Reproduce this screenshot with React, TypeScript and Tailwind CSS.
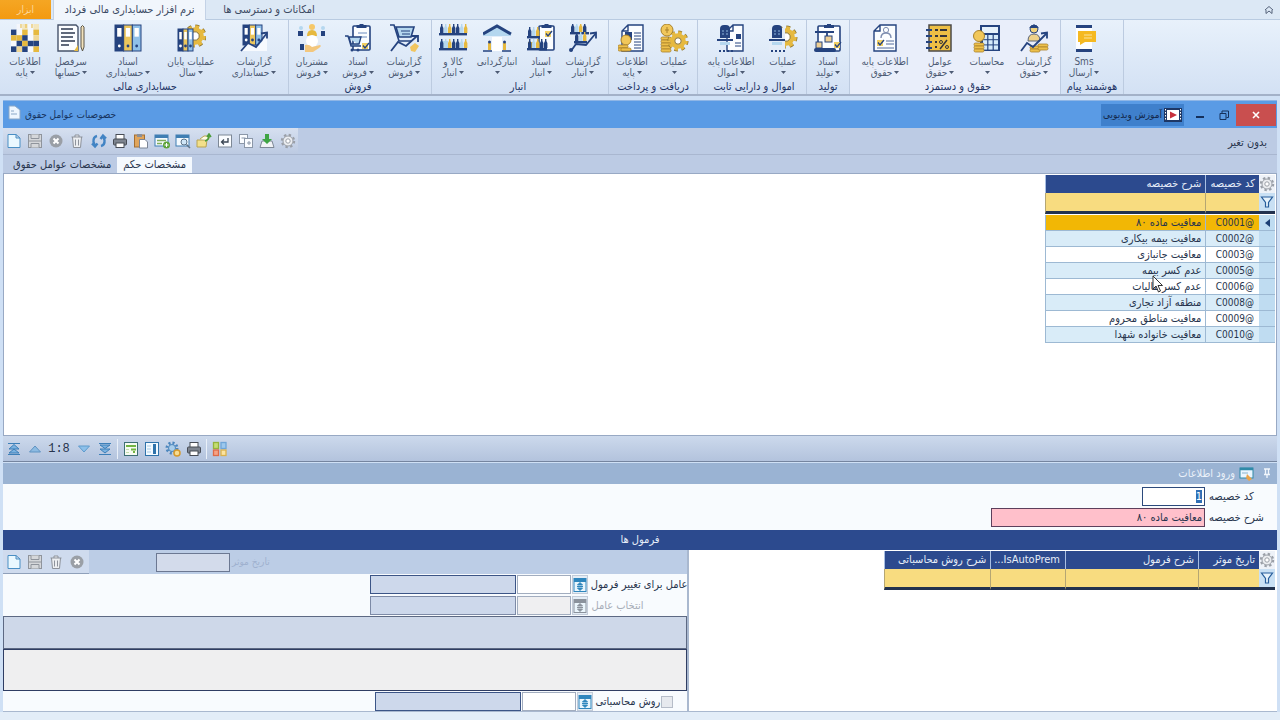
import { useState, type ReactNode } from 'react'
import clsx from 'clsx'

const NAVY = '#25437f'
const GOLD = '#e6b93f'
const SKY = '#b5d7ef'

/* ---------- ribbon icon parts ---------- */

function Gear({ cx, cy, r }: { cx: number; cy: number; r: number }) {
  const tooth = (2 * Math.PI * r) / 16
  return (
    <g fill="none">
      <circle cx={cx} cy={cy} r={r} stroke="#8a7331" strokeWidth="5" strokeDasharray={`${tooth} ${tooth}`} />
      <circle cx={cx} cy={cy} r={r} stroke={GOLD} strokeWidth="3.6" strokeDasharray={`${tooth} ${tooth}`} />
      <circle cx={cx} cy={cy} r={r - 2.5} stroke={GOLD} strokeWidth="4.5" />
      <circle cx={cx} cy={cy} r={r - 4.8} stroke="#8a7331" fill="#fff" />
    </g>
  )
}

function Binders({ x, y, w, h }: { x: number; y: number; w: number; h: number }) {
  const c = w / 3
  return (
    <g stroke={NAVY}>
      <rect x={x} y={y} width={c} height={h} fill={NAVY} />
      <rect x={x + c} y={y} width={c} height={h} fill="#ecc65c" />
      <rect x={x + 2 * c} y={y} width={c} height={h} fill="#8fc0e8" />
      {[0, 1, 2].map((i) => (
        <g key={i} stroke="none">
          <rect x={x + i * c + c / 4} y={y + 3} width={c / 2} height={h / 3} fill="#fff" />
          <circle cx={x + i * c + c / 2} cy={y + h - 5} r="1.4" fill={i === 0 ? '#fff' : NAVY} />
        </g>
      ))}
    </g>
  )
}

function Trend({ d }: { d: string }) {
  return (
    <g fill="none" stroke={NAVY} strokeWidth="1.8">
      <path d={d} />
      <path d="M21 9.5 L27 8.5 L27 14.5" />
    </g>
  )
}

function Coins({ x, y, rows }: { x: number; y: number; rows: number }) {
  return (
    <g fill="#edc04b" stroke="#a9822a" strokeWidth=".8">
      {Array.from({ length: rows }, (_, i) => (
        <rect key={i} x={x} y={y + i * 3} width="10" height="3" rx="1.4" />
      ))}
    </g>
  )
}

function Page({ x, y, w, h }: { x: number; y: number; w: number; h: number }) {
  return (
    <path
      d={`M${x + 6} ${y} H${x + w} V${y + h} H${x} V${y + 6} Z M${x + 6} ${y} V${y + 6} H${x}`}
      fill="#fbfdff"
      stroke={NAVY}
      strokeWidth="1.4"
    />
  )
}

function Shelf({ x, y, w }: { x: number; y: number; w: number }) {
  const n = Math.floor(w / 4)
  return (
    <g>
      {Array.from({ length: n }, (_, i) => (
        <path
          key={i}
          d={`M${x + i * 4 + 1} ${y} v-5 l1 -2 v-2 h1.4 v2 l1 2 v5 z`}
          fill={[NAVY, SKY, GOLD, NAVY][i % 4]}
        />
      ))}
      <rect x={x} y={y} width={w} height="2.4" fill={NAVY} />
    </g>
  )
}

function Cart() {
  return (
    <g fill="none" stroke={NAVY} strokeWidth="1.6">
      <path d="M6 3 H24 L21 13 H9 Z" fill={SKY} />
      <path d="M0 1 H4 L9 17 H22" />
      <path d="M11 7 h9 M12 10 h8" strokeWidth="1" />
    </g>
  )
}

function Clipboard({ x, y, w, h }: { x: number; y: number; w: number; h: number }) {
  return (
    <g>
      <rect x={x} y={y + 2} width={w} height={h - 2} rx="1" fill="#fbfdff" stroke={NAVY} strokeWidth="1.6" />
      <path d={`M${x + w / 2 - 5} ${y + 4} v-3 h3 v-1 h4 v1 h3 v3 z`} fill={NAVY} />
    </g>
  )
}

function Check({ x, y }: { x: number; y: number }) {
  return (
    <g>
      <rect x={x} y={y} width="6" height="6" fill="#f2cf62" />
      <path d={`M${x + 1} ${y + 2.5} l2 2.5 l4 -5`} fill="none" stroke={NAVY} strokeWidth="1.3" />
    </g>
  )
}

function Helmet({ x }: { x: number }) {
  return (
    <g>
      <path d={`M${x + 3} 14 V5 q0 -4 4 -4 h2 q4 0 4 4 V14 Z`} fill={NAVY} />
      <path d={`M${x + 5} 7 h2 M${x + 9} 7 h2 M${x + 5} 10 h2 M${x + 9} 10 h2`} stroke="#8fb6dd" />
      <rect x={x} y="15" width="16" height="2" fill={NAVY} />
      <path d={`M${x + 3} 18 h10 v3 h-10 z`} fill={SKY} />
      <path d={`M${x + 2} 27 h14`} stroke={NAVY} strokeWidth="2" strokeDasharray="2 2" />
    </g>
  )
}

const checker = [
  ['', '#f4f6fb', '#f3e6bd', '#f4f6fb', '#f3e6bd'],
  [NAVY, '#f7f9fd', GOLD, '#f7f9fd', GOLD],
  [GOLD, GOLD, NAVY, '#f7f9fd', '#f0d795'],
  ['#f7f9fd', NAVY, GOLD, NAVY, NAVY],
  [NAVY, '#f0d795', NAVY, '#f7f9fd', GOLD],
]

const icons: Record<string, ReactNode> = {
  checker: (
    <g>
      {checker.flatMap((row, r) =>
        row.map((fill, c) => fill && <rect key={`${r}-${c}`} x={c * 5.6} y={r * 5.6} width="5.6" height="5.6" fill={fill} />)
      )}
      <path d="M10 0 v4 M15 0 v4 M21 0 v4" stroke={GOLD} />
    </g>
  ),
  ledger: (
    <g>
      <path d="M1 1 H19 L21 3 V27 H1 Z" fill="#fbfdff" stroke="#46536b" strokeWidth="1.4" />
      <path d="M4 5 h12 M4 9 h14 M4 13 h12 M4 17 h14 M4 21 h8" stroke="#2c3850" strokeWidth="1.4" />
      <path d="M17 27 L21 21 V27 Z" fill={GOLD} />
      <path d="M24 3 q1.500 -3 3 0 V23 L25.500 27 L24 23 Z" fill="#f3e3bd" stroke="#5a5548" />
    </g>
  ),
  binders: <Binders x={1} y={1} w={26} h={26} />,
  bindersGear: (
    <g>
      <Gear cx={18} cy={12} r={9} />
      <Binders x={1} y={5} w={15} h={22} />
    </g>
  ),
  bindersChart: (
    <g>
      <Binders x={3} y={1} w={19} h={20} />
      <path d="M1 27 L8 19 L17 23 L27 12 V27 Z" fill="#f7fafe" />
      <Trend d="M1 27 L8 19 L16 23 L27 9" />
    </g>
  ),
  customers: (
    <g>
      <circle cx="3" cy="4" r="2" fill={SKY} />
      <rect x="0" y="7" width="5" height="5" fill={NAVY} />
      <circle cx="25" cy="4" r="2" fill={SKY} />
      <rect x="23" y="7" width="4" height="5" fill={NAVY} />
      <circle cx="14" cy="3" r="3" fill="#f6c869" />
      <path d="M9 12 q0 -6 5 -6 t5 6 z" fill={GOLD} />
      <circle cx="14" cy="17" r="6" fill="#fff" />
      <path d="M7 21 q4 -1 7 2 l8 -2 q2 1 -1 3 l-6 4 h-8 z" fill="#f3c77d" />
      <rect x="2" y="20" width="4" height="6" fill={NAVY} />
    </g>
  ),
  cartDoc: (
    <g>
      <Clipboard x={9} y={0} w={17} h={26} />
      <path d="M14 9 h9 M15 13 h8" stroke="#6a8cc0" />
      <path d="M1 12 h3 l3 10 h10 M5 13 h12 l-2 7 h-8 z" fill={SKY} stroke={NAVY} strokeWidth="1.3" />
      <circle cx="8" cy="26" r="1.500" fill={NAVY} />
      <circle cx="14" cy="26" r="1.500" fill={NAVY} />
      <Check x={18} y={19} />
    </g>
  ),
  cartChart: (
    <g>
      <Cart />
      <path d="M1 27 L8 18 L16 22 L27 12" fill="none" stroke={NAVY} strokeWidth="1.8" />
      <path d="M22 12 h6 v6" fill="none" stroke={NAVY} strokeWidth="1.8" />
      <path d="M20 23 l5 -4 l4 3 l-4 6 l-4 -1 z" fill="#f1c560" />
    </g>
  ),
  goods: (
    <g>
      <Shelf x={0} y={9} w={28} />
      <rect x="1" y="17" width="8" height="7" fill={SKY} />
      <Shelf x={0} y={24} w={28} />
    </g>
  ),
  warehouse: (
    <g>
      <path d="M0 9 L14 1 L28 9 V12 H0 Z" fill={SKY} />
      <path d="M0 10 L14 2 L28 10" fill="none" stroke={NAVY} strokeWidth="3" />
      <rect x="3" y="12" width="22" height="15" fill="#e4eefa" />
      <rect x="9" y="13" width="10" height="14" fill="#fff" />
      <rect x="5" y="19" width="3" height="7" fill={GOLD} />
      <rect x="20" y="19" width="3" height="7" fill={GOLD} />
      <circle cx="6.500" cy="18" r="1.500" fill={NAVY} />
      <circle cx="21.500" cy="18" r="1.500" fill={NAVY} />
      <path d="M0 27 h9 M19 27 h9" stroke={NAVY} strokeWidth="1.6" />
    </g>
  ),
  stockDoc: (
    <g>
      <Clipboard x={12} y={0} w={15} h={26} />
      <Check x={18} y={7} />
      <Shelf x={0} y={12} w={13} />
      <rect x="1" y="18" width="6" height="6" fill={GOLD} />
      <Shelf x={0} y={24} w={20} />
    </g>
  ),
  stockChart: (
    <g>
      <Shelf x={1} y={8} w={19} />
      <Shelf x={5} y={17} w={13} />
      <Trend d="M2 27 L7 20 L17 21 L27 9" />
      <circle cx="2" cy="26" r="2" fill={NAVY} />
    </g>
  ),
  coinDoc: (
    <g>
      <Page x={4} y={1} w={21} h={26} />
      <rect x="7" y="8" width="7" height="8" fill={NAVY} />
      <path d="M16 9 h7 M16 12 h7 M16 15 h7 M16 18 h7 M16 21 h7 M16 24 h7" stroke={NAVY} />
      <circle cx="8" cy="16" r="5" fill="#f1c75a" stroke="#a9822a" />
      <Coins x={0} y={21} rows={2} />
      <Coins x={3} y={24} rows={1} />
    </g>
  ),
  coinGear: (
    <g>
      <Coins x={1} y={13} rows={5} />
      <circle cx="7" cy="6" r="6" fill="#f1c75a" stroke="#a9822a" />
      <path d="M5 6 h4 M7 3 v6" stroke="#a9822a" />
      <Gear cx={18} cy={17} r={8} />
    </g>
  ),
  assetDoc: (
    <g>
      <Page x={10} y={1} w={16} h={26} />
      <path d="M19 10 h5 v5 h-5 z" fill={NAVY} />
      <path d="M18 19 h6 M18 22 h6" stroke={NAVY} />
      <Helmet x={0} />
    </g>
  ),
  assetGear: (
    <g>
      <Gear cx={17} cy={13} r={9} />
      <rect x="0" y="4" width="16" height="24" fill="#e3ecf8" />
      <Helmet x={0} />
    </g>
  ),
  production: (
    <g>
      <Clipboard x={4} y={0} w={22} h={27} />
      <path d="M1 8 H20 M13 8 V12" stroke={NAVY} strokeWidth="1.8" />
      <rect x="11" y="12" width="7" height="6" fill="#efcf94" stroke={NAVY} />
      <rect x="2" y="18" width="6" height="6" fill="#efcf94" stroke={NAVY} />
      <rect x="0" y="24" width="22" height="4" rx="2" fill={NAVY} />
      <Check x={20} y={18} />
    </g>
  ),
  person: (
    <g>
      <Page x={3} y={1} w={22} h={26} />
      <circle cx="15" cy="6" r="2.600" fill="none" stroke="#7d8db0" />
      <path d="M10 14 q0 -5 5 -5 t5 5" fill="none" stroke="#7d8db0" strokeWidth="1.4" />
      <Check x={6} y={16} />
      <path d="M15 17 h8 M6 24 h17 M15 20 h8" stroke="#536a9c" />
    </g>
  ),
  factors: (
    <g>
      <rect x="3" y="1" width="22" height="26" fill="#edbf45" stroke="#4b4a48" strokeWidth="1.5" />
      <path d="M0 6 h6 M0 12 h6 M0 18 h6 M0 24 h6" stroke={NAVY} strokeWidth="1.8" />
      <path d="M9 6 h3 M14 6 h7 M9 12 h3 M14 12 h7 M9 18 h2 M9 23 h2" stroke="#35343a" strokeWidth="2" />
      <path d="M14 25 L21 16" stroke="#35343a" strokeWidth="1.5" />
      <circle cx="15" cy="18" r="1.500" fill="none" stroke="#35343a" />
      <circle cx="21" cy="23" r="1.500" fill="none" stroke="#35343a" />
    </g>
  ),
  calculator: (
    <g>
      <rect x="7" y="1" width="20" height="26" fill={NAVY} />
      <rect x="9" y="3" width="16" height="6" fill="#e6f1fb" />
      {[0, 1, 2].flatMap((r) =>
        [0, 1, 2].map((c) => <rect key={`${r}${c}`} x={10 + c * 5.4} y={11 + r * 5.2} width="4.2" height="4.2" fill="#d5eafa" />)
      )}
      <circle cx="6" cy="12" r="5.500" fill="#f1c75a" stroke="#a9822a" />
      <Coins x={1} y={19} rows={3} />
    </g>
  ),
  payReport: (
    <g>
      <circle cx="14" cy="5" r="4" fill="#f0d27c" stroke={NAVY} />
      <path d="M9 4 q5 -7 10 0 z" fill={NAVY} />
      <path d="M8 17 q0 -7 6 -7 t6 7 z" fill="#eed18a" stroke="#5d6577" />
      <Coins x={10} y={22} rows={2} />
      <Coins x={18} y={20} rows={2} />
      <Trend d="M1 27 L7 19 L13 23 L27 9" />
    </g>
  ),
  sms: (
    <g>
      <rect x="6" y="1" width="16" height="27" rx="1" fill="#fdfeff" />
      <path d="M6 1 h16 v3 h-16 z M6 25 h16 v3 h-16 z" fill={NAVY} />
      <path d="M8 7 H26 V18 H15 L10 21 V18 H8 Z" fill="#f5b921" />
      <path d="M14 11 h8 M14 14 h8" stroke="#fbe3a0" />
    </g>
  ),
}

interface RibbonItem {
  icon: string
  top: string
  bottom?: string
  width: string
}

interface RibbonGroup {
  title: string
  items: RibbonItem[]
  className?: string
}

const ribbon: RibbonGroup[] = [
  {
    title: 'حسابداری مالی',
    className: 'pl-0.5',
    items: [
      { icon: 'checker', top: 'اطلاعات', bottom: 'پایه', width: 'w-[46px]' },
      { icon: 'ledger', top: 'سرفصل', bottom: 'حسابها', width: 'w-[46px]' },
      { icon: 'binders', top: 'اسناد', bottom: 'حسابداری', width: 'w-[68px]' },
      { icon: 'bindersGear', top: 'عملیات پایان', bottom: 'سال', width: 'w-[58px]' },
      { icon: 'bindersChart', top: 'گزارشات', bottom: 'حسابداری', width: 'w-[68px]' },
    ],
  },
  {
    title: 'فروش',
    className: 'pr-1',
    items: [
      { icon: 'customers', top: 'مشتریان', bottom: 'فروش', width: 'w-[46px]' },
      { icon: 'cartDoc', top: 'اسناد', bottom: 'فروش', width: 'w-[46px]' },
      { icon: 'cartChart', top: 'گزارشات', bottom: 'فروش', width: 'w-[46px]' },
    ],
  },
  {
    title: 'انبار',
    className: 'pr-1',
    items: [
      { icon: 'goods', top: 'کالا و', bottom: 'انبار', width: 'w-[42px]' },
      { icon: 'warehouse', top: 'انبارگردانی', width: 'w-[46px]' },
      { icon: 'stockDoc', top: 'اسناد', bottom: 'انبار', width: 'w-[42px]' },
      { icon: 'stockChart', top: 'گزارشات', bottom: 'انبار', width: 'w-[42px]' },
    ],
  },
  {
    title: 'دریافت و پرداخت',
    className: 'px-0.5',
    items: [
      { icon: 'coinDoc', top: 'اطلاعات', bottom: 'پایه', width: 'w-[42px]' },
      { icon: 'coinGear', top: 'عملیات', width: 'w-[42px]' },
    ],
  },
  {
    title: 'اموال و دارایی ثابت',
    className: 'pl-1',
    items: [
      { icon: 'assetDoc', top: 'اطلاعات پایه', bottom: 'اموال', width: 'w-[58px]' },
      { icon: 'assetGear', top: 'عملیات', width: 'w-[46px]' },
    ],
  },
  { title: 'تولید', items: [{ icon: 'production', top: 'اسناد', bottom: 'تولید', width: 'w-[42px]' }] },
  {
    title: 'حقوق و دستمزد',
    className: 'bg-[#e9eefa] pl-1.5',
    items: [
      { icon: 'person', top: 'اطلاعات پایه', bottom: 'حقوق', width: 'w-[58px]' },
      { icon: 'factors', top: 'عوامل', bottom: 'حقوق', width: 'w-[52px]' },
      { icon: 'calculator', top: 'محاسبات', width: 'w-[42px]' },
      { icon: 'payReport', top: 'گزارشات', bottom: 'حقوق', width: 'w-[52px]' },
    ],
  },
  {
    title: 'هوشمند پیام',
    className: 'w-[63px]',
    items: [{ icon: 'sms', top: 'Sms', bottom: 'ارسال', width: 'w-[46px]' }],
  },
]

function Ribbon() {
  return (
    <div className="flex border-b-2 border-[#a3b1c8] bg-gradient-to-b from-[#e8f1fb] to-[#d3e1f4]">
      {ribbon.map((group) => (
        <section key={group.title} className={clsx('flex shrink-0 flex-col border-r border-[#bccbe0] pt-1', group.className)}>
          <div className="flex">
            {group.items.map((item) => (
              <button key={item.icon} className={clsx('flex h-14 shrink-0 flex-col items-center text-[10px] whitespace-nowrap text-[#4d5b74]', item.width)}>
                <svg viewBox="0 0 29 29" className="size-[29px] shrink-0">{icons[item.icon]}</svg>
                <span dir="rtl" className="mt-[3px] leading-[11px]">{item.top}</span>
                <span className="flex items-center gap-0.5 leading-[11px]">
                  {item.bottom && <span dir="rtl">{item.bottom}</span>}
                  <svg viewBox="0 0 5 3" className="my-1 h-[3px] w-[5px]"><path d="M0 0 h5 L2.500 3 z" fill="#4d5b74" /></svg>
                </span>
              </button>
            ))}
          </div>
          <h2 dir="rtl" className="text-center leading-[14px] whitespace-nowrap text-[#1f3566]">{group.title}</h2>
        </section>
      ))}
    </div>
  )
}

/* ---------- small toolbar icons ---------- */

const small: Record<string, ReactNode> = {
  new: <path d="M2 1.500 H10 L14 5 V14.500 H2 Z M10 1.500 V5 H14" fill="#eaf8ff" stroke="#4a8fc4" />,
  save: (
    <g fill="#d5d7da" stroke="#8f949c">
      <rect x="1.500" y="1.500" width="13" height="13" />
      <path d="M4 1.500 v4 h8 v-4 M1.500 8 h13 M4 14.500 v-4 h8 v4" />
    </g>
  ),
  cancel: (
    <g>
      <circle cx="8" cy="8" r="6.500" fill="#9a9fa6" />
      <path d="M5.500 5.500 l5 5 M10.500 5.500 l-5 5" stroke="#fff" strokeWidth="2" />
    </g>
  ),
  trash: <path d="M2.500 4 H13.500 M6 4 V2 H10 V4 M3.500 4 L4.500 14.500 H11.500 L12.500 4 M6.500 6.500 V12.500 M9.500 6.500 V12.500" fill="#eceef1" stroke="#8d929b" />,
  refresh: (
    <g fill="none" stroke="#4284c4" strokeWidth="2.400">
      <path d="M6 3 Q2 4 2.500 9 L4 13 M1 10.500 l3 3 l2.500 -3" />
      <path d="M10 13 Q14 12 13.500 7 L12 3 M9.500 6 l2.500 -3.500 l3 3" />
    </g>
  ),
  print: (
    <g stroke="#474c55">
      <rect x="4" y="1.500" width="8" height="5" fill="#fff" />
      <rect x="1.500" y="6" width="13" height="6" rx="1" fill="#7d848f" />
      <rect x="4" y="10" width="8" height="4.500" fill="#fff" />
    </g>
  ),
  paste: (
    <g>
      <rect x="1.500" y="2" width="10" height="12" fill="#e0a55c" stroke="#a36f33" />
      <rect x="4" y="1" width="5" height="3" fill="#8b8f97" />
      <path d="M6.500 6.500 H12 L14.500 9 V15 H6.500 Z" fill="#fff" stroke="#7b8596" />
    </g>
  ),
  formAdd: (
    <g>
      <rect x="1" y="2" width="13" height="11" fill="#f4faff" stroke="#3f7eb3" />
      <path d="M1 3.500 h13" stroke="#3f7eb3" strokeWidth="3" />
      <path d="M3 7.500 h9 M3 10.500 h5" stroke="#7fae5b" strokeWidth="1.500" />
      <circle cx="12.500" cy="12" r="3.500" fill="#5da33a" />
      <path d="M10.500 12 h4 M12.500 10 v4" stroke="#fff" />
    </g>
  ),
  formFind: (
    <g>
      <rect x="1" y="2" width="13" height="11" fill="#f4faff" stroke="#3f7eb3" />
      <path d="M1 3.500 h13" stroke="#3f7eb3" strokeWidth="3" />
      <circle cx="9" cy="9" r="3" fill="#cfe6f7" stroke="#5d7388" />
      <path d="M11.500 11.500 l3.500 3.500" stroke="#5d7388" strokeWidth="1.500" />
    </g>
  ),
  export: (
    <g>
      <path d="M1 7 H11 L10 14 H1 Z" fill="#f3e08a" stroke="#b8a352" />
      <path d="M4 6 L8 3 L14 3 L12 7" fill="#fffbe0" stroke="#b8a352" />
      <path d="M9 8 Q13 7 13 2 M11 4 l2 -3 l2 3" fill="none" stroke="#4c9c3a" strokeWidth="1.600" />
    </g>
  ),
  enter: (
    <g>
      <rect x="1.500" y="2" width="13" height="12" fill="#fafcff" stroke="#7d8896" />
      <path d="M11 5 V9 H5 M7 6.500 L4.500 9 L7 11.500" fill="none" stroke="#3b4654" strokeWidth="1.300" />
    </g>
  ),
  copy: (
    <g fill="#fafcff" stroke="#8b97a8">
      <rect x="1.500" y="1.500" width="8" height="9" />
      <rect x="6.500" y="5.500" width="8" height="9" />
      <path d="M3.500 5 h4 M9 10 h4 M11 8 v4" />
    </g>
  ),
  import: (
    <g>
      <path d="M3 8 H13 L15 14.500 H1 Z" fill="#f1f3f6" stroke="#7d8896" />
      <path d="M6 1 H10 V6 H13 L8 11 L3 6 H6 Z" fill="#3fa544" />
    </g>
  ),
  gear: (
    <g fill="none" stroke="#9a9fa7">
      <circle cx="8" cy="8" r="6.200" strokeWidth="2" strokeDasharray="2.430 2.430" />
      <circle cx="8" cy="8" r="5" fill="#eceef1" />
      <circle cx="8" cy="8" r="2.200" fill="#fff" />
    </g>
  ),
  filter: <path d="M2.500 3 H13.500 L9.500 8.500 V13 H6.500 V8.500 Z" fill="#e6f2fb" stroke="#275d9b" strokeWidth="1.200" />,
  first: <path d="M2 2.500 H14 M2 13.500 H14 M8 3.500 L13 8 H3 Z M8 8 L13 12 H3 Z" fill="#7ab2e0" stroke="#3d7fb8" />,
  up: <path d="M8 5 L13.500 11 H2.500 Z" fill="#8dbbe2" stroke="#5f93c2" />,
  down: <path d="M8 11 L13.500 5 H2.500 Z" fill="#8dc0ea" stroke="#5f9bcc" />,
  last: <path d="M2 2.500 H14 M2 13.500 H14 M8 7.500 L13 4 H3 Z M8 12 L13 8 H3 Z" fill="#7ab2e0" stroke="#3d7fb8" />,
  green: (
    <g>
      <rect x="1.500" y="1.500" width="13" height="13" fill="#f6fbf2" stroke="#3e6f74" />
      <path d="M3 5 H13 M8 8.500 H13 M10 11 H12" stroke="#72b443" strokeWidth="2" />
      <path d="M3 8.500 H6 M3 11.500 H6" stroke="#c4dfae" />
    </g>
  ),
  columns: (
    <g>
      <rect x="1.500" y="1.500" width="13" height="13" fill="#f3faff" stroke="#2f73ab" />
      <rect x="9" y="3" width="3" height="10" fill="#2f73ab" />
      <path d="M3 5 h4 M3 8 h4 M3 11 h4" stroke="#a8cbe6" />
    </g>
  ),
  gears: (
    <g fill="none">
      <circle cx="7" cy="7" r="5" stroke="#4b86bd" strokeWidth="3" strokeDasharray="2 1.900" />
      <circle cx="7" cy="7" r="3.500" fill="#a9cdea" stroke="#4b86bd" />
      <circle cx="12" cy="12" r="3" fill="#f6dc92" stroke="#d79a2b" strokeWidth="1.500" />
    </g>
  ),
  blocks: (
    <g strokeWidth="1.300">
      <rect x="1.500" y="1.500" width="5" height="6" fill="#c4dd73" stroke="#94b43c" />
      <rect x="9" y="1.500" width="5" height="6" fill="#9cc8ee" stroke="#6fa5d8" />
      <rect x="1.500" y="9" width="5" height="5.500" fill="#f6a184" stroke="#de6a48" />
      <rect x="9" y="9" width="5" height="5.500" fill="#fbe3a0" stroke="#dbb14b" />
    </g>
  ),
  doc: <path d="M2 1 H8 L13 5 V14 H2 Z M4 6 h3 M4 9 h6" fill="#eef6ff" stroke="#8aa7c7" />,
  edit: (
    <g>
      <rect x="1" y="2" width="13" height="10" fill="#eaf6ff" stroke="#2f8aa8" />
      <path d="M1 3 h13" stroke="#2f8aa8" strokeWidth="2.500" />
      <path d="M3 7 h6" stroke="#8bb4cc" />
      <path d="M8 8 L13 13 L10 15 L7 12 Z" fill="#e9a34a" />
    </g>
  ),
  pin: <path d="M5 3 H11 M6.500 3 V8 M9.500 3 V8 M5 8.500 H11 M8 9 V12" fill="none" stroke="#f1f6fc" strokeWidth="1.300" />,
  lookup: (
    <g fill="none" stroke="currentColor">
      <rect x="2" y="1.500" width="12" height="13" fill="#eaf5fc" />
      <path d="M2 3.500 h12" strokeWidth="3" />
      <path d="M8 5.500 l2.500 2.500 h-5 z M8 13.500 l2.500 -2.500 h-5 z M5 9.500 h6" fill="currentColor" />
    </g>
  ),
}

function SmallIcon({ name, className }: { name: string; className?: string }) {
  return <svg viewBox="0 0 16 16" className={clsx('size-4 shrink-0', className)}>{small[name]}</svg>
}

function ToolButton({ name, label }: { name: string; label: string }) {
  return (
    <button aria-label={label} className="flex w-[21px] justify-center">
      <SmallIcon name={name} />
    </button>
  )
}

/* ---------- grids ---------- */

const rows = [
  ['C0001@', 'معافیت ماده ۸۰'],
  ['C0002@', 'معافیت بیمه بیکاری'],
  ['C0003@', 'معافیت جانبازی'],
  ['C0005@', 'عدم کسر بیمه'],
  ['C0006@', 'عدم کسر مالیات'],
  ['C0008@', 'منطقه آزاد تجاری'],
  ['C0009@', 'معافیت مناطق محروم'],
  ['C0010@', 'معافیت خانواده شهدا'],
]

function GridHead({ columns }: { columns: { title: string; width: string; ltr?: boolean }[] }) {
  return (
    <thead>
      <tr className="h-[18px]">
        <th className="w-4 bg-[#eef2f8]"><SmallIcon name="gear" /></th>
        {columns.map((c) => (
          <th
            key={c.title}
            dir={c.ltr ? 'ltr' : 'rtl'}
            className={clsx('border-l border-[#a9bfe3] bg-[#2c4a8e] px-1 text-right font-normal whitespace-nowrap text-[#e6edf8]', c.width)}
          >
            {c.title}
          </th>
        ))}
      </tr>
      <tr className="h-[21px]">
        <td className="border-b-3 border-[#22324f] bg-[#c9e0f4]"><SmallIcon name="filter" /></td>
        {columns.map((c) => (
          <td key={c.title} className="border-b-3 border-l border-b-[#22324f] border-l-[#b5a673] bg-[#f8dc80]" />
        ))}
      </tr>
    </thead>
  )
}

function FactorsGrid() {
  const [active, setActive] = useState(0)
  return (
    <table dir="rtl" className="table-fixed border-separate border-spacing-0">
      <GridHead columns={[{ title: 'کد خصیصه', width: 'w-[52px]' }, { title: 'شرح خصیصه', width: 'w-40' }]} />
      <tbody className="before:block before:h-px">
        {rows.map(([code, title], i) => {
          const fill = i === active ? 'bg-[#f2b705]' : i % 2 ? 'bg-[#d9ecf8]' : 'bg-white'
          return (
            <tr key={code} className="h-4" onClick={() => setActive(i)}>
              <td className="border-b border-[#9db9d3] bg-[#bfdcf1] p-0">
                {i === active && <svg viewBox="0 0 16 10" className="h-2.5 w-4"><path d="M11 1 V9 L6 5 Z" fill="#1d3f74" /></svg>}
              </td>
              <td dir="ltr" className={clsx('border-b border-l border-[#9db9d3] px-1 text-right text-[10px] leading-[15px]', fill)}>{code}</td>
              <td className={clsx('relative border-b border-l border-[#9db9d3] px-1 leading-[15px] whitespace-nowrap', fill)}>
                {title}
                {i === 3 && (
                  <svg viewBox="0 0 12 18" className="pointer-events-none absolute top-3 left-[106px] z-10 h-[18px] w-3">
                    <path d="M1 1 V14 L4 11 L6.500 17 L8.500 16 L6 10.500 H10.500 Z" fill="#fff" stroke="#333" />
                  </svg>
                )}
              </td>
            </tr>
          )
        })}
      </tbody>
    </table>
  )
}

/* ---------- formula form ---------- */

interface LookupProps {
  id: string
  label: string
  disabled?: boolean
  checkbox?: boolean
}

function LookupRow({ id, label, disabled, checkbox }: LookupProps) {
  return (
    <div className="flex items-center justify-end gap-px">
      <input
        aria-label={`شرح ${label}`}
        readOnly
        className={clsx('h-[19px] w-[146px] border bg-[#cdd8eb]', disabled ? 'border-[#7d8aa6]' : 'border-[#3c5587]')}
      />
      <input
        id={id}
        disabled={disabled}
        className={clsx('h-[19px] w-[54px] border border-[#a2adbf]', disabled ? 'bg-[#efeff1]' : 'bg-white')}
      />
      <button
        aria-label={`انتخاب ${label}`}
        disabled={disabled}
        className={clsx('flex h-[19px] w-4 items-center justify-center border border-[#c3ccd9] bg-[#e4edf6]', disabled ? 'text-[#8b929c]' : 'text-[#2f86bd]')}
      >
        <SmallIcon name="lookup" />
      </button>
      <label
        htmlFor={id}
        dir="rtl"
        className={clsx('ml-0.5 text-left whitespace-nowrap', checkbox ? 'w-16' : 'w-24', disabled ? 'text-[#a7adb8]' : 'text-[#27344d]')}
      >
        {label}
      </label>
      {checkbox && (
        <input type="checkbox" aria-label={label} className="mr-3.5 size-3 appearance-none border border-[#b5bcc8] bg-[#e6e9ee]" />
      )}
    </div>
  )
}

function FormulaForm() {
  return (
    <div className="flex flex-[686] flex-col gap-px border-r-2 border-[#a9b8cf] bg-[#f8fbfe]">
      <div className="flex h-6 items-center bg-[#bccde6]">
        <div className="flex h-6 items-center border-b border-[#8fa0ba] bg-[#cfdbee] pr-0.5">
          <ToolButton name="new" label="جدید" />
          <ToolButton name="save" label="ذخیره" />
          <ToolButton name="trash" label="حذف" />
          <ToolButton name="cancel" label="انصراف" />
        </div>
        <input id="date" disabled className="ml-[67px] h-[19px] w-[74px] border border-[#6c7892] bg-[#d3dbeb]" />
        <label htmlFor="date" dir="rtl" className="ml-0.5 text-[10px] text-[#9fb1cf]">تاریخ موثر</label>
      </div>
      <div className="flex flex-col gap-0.5">
        <LookupRow id="factor" label="عامل برای تغییر فرمول" />
        <LookupRow id="pick" label="انتخاب عامل" disabled />
      </div>
      <textarea aria-label="فرمول" readOnly className="block h-[33px] w-full resize-none border border-[#5d6983] bg-[#ced8e9]" />
      <textarea aria-label="شرح فرمول" className="-mt-px block h-[42px] w-full resize-none border border-[#2f3d63] bg-[#efeff0]" />
      <LookupRow id="method" label="روش محاسباتی" checkbox />
    </div>
  )
}

export default function App() {
  const [tab, setTab] = useState(1)
  const [title, setTitle] = useState('معافیت ماده ۸۰')

  return (
    <div className="flex min-h-screen flex-col overflow-hidden bg-[#cfe0f5] font-['DejaVu_Sans_Condensed','DejaVu_Sans',sans-serif] text-[11px] leading-3 text-[#27344d]">
      {/* ribbon tabs */}
      <nav className="flex h-5 border-b border-[#b9cbe1] bg-[#dce8f5]">
        <button className="w-[51px] bg-gradient-to-b from-[#f5a623] to-[#f39a10] text-[10px] text-[#fbd79a]">ابزار</button>
        <button className="ml-0.5 h-5 w-[153px] border-x border-[#c3d2e6] bg-[#f1f6fc] whitespace-nowrap text-[#3c4a63]" dir="rtl">نرم افزار حسابداری مالی فرداد</button>
        <button className="w-[126px] whitespace-nowrap text-[#3c4a63]" dir="rtl">امکانات و دسترسی ها</button>
        <button aria-label="جمع کردن" className="mr-1.5 ml-auto">
          <svg viewBox="0 0 10 10" className="size-2.5"><path d="M1 5 L5 1.500 L9 5 M2 5 V8.500 L5 6 L8 8.500 V5" fill="none" stroke="#55627a" /></svg>
        </button>
      </nav>
      <Ribbon />

      {/* child window */}
      <main className="mx-[3px] mt-1 flex flex-1 flex-col border-t border-[#8fb6e6]">
        <header className="flex h-[27px] items-center bg-[#5a9be5] pl-1">
          <SmallIcon name="doc" className="mb-1" />
          <h1 dir="rtl" className="ml-0.5 text-[10px] text-[#17345f]">خصوصیات عوامل حقوق</h1>
          <div className="ml-auto flex items-start">
            <button dir="rtl" className="flex h-[22px] items-center gap-0.5 bg-[#3f80cc] px-0.5 text-[10px] whitespace-nowrap text-[#14294d]">
              <svg viewBox="0 0 18 14" className="h-3.5 w-[18px]">
                <rect width="18" height="14" fill="#1e3765" />
                <rect x="3" y="2" width="12" height="10" fill="#fff" />
                <path d="M1.500 1 V13 M16.500 1 V13" stroke="#fff" strokeDasharray="1.500 1.500" />
                <path d="M6 3.500 L13 7 L6 10.500 Z" fill="#c62f3b" />
              </svg>
              آموزش ویدیویی
            </button>
            <button aria-label="کوچک کردن" className="ml-2 flex h-[22px] w-4 items-center justify-center"><span className="mt-1 h-0.5 w-2 bg-[#15305c]" /></button>
            <button aria-label="بازیابی" className="ml-1 flex h-[22px] w-6 items-center justify-center">
              <svg viewBox="0 0 10 10" className="size-2.5"><path d="M1 3.500 H7 V9.500 H1 Z M3 3 V1 H9.500 V7.500 H7.500" fill="none" stroke="#15305c" /></svg>
            </button>
            <button aria-label="بستن" className="mr-px flex h-[22px] w-10 items-center justify-center bg-[#c94f4f]">
              <svg viewBox="0 0 8 8" className="size-2"><path d="M1 1 L7 7 M7 1 L1 7" stroke="#fff" strokeWidth="1.600" /></svg>
            </button>
          </div>
        </header>

        <div className="flex h-[27px] items-center justify-between border-b border-[#a9b7d0] bg-[#bccbe4]">
          <div className="flex h-[26px] items-center bg-gradient-to-b from-[#d6e0f0] to-[#bccae2]">
            <ToolButton name="new" label="جدید" />
            <ToolButton name="save" label="ذخیره" />
            <ToolButton name="cancel" label="انصراف" />
            <ToolButton name="trash" label="حذف" />
            <span className="w-px" />
            <ToolButton name="refresh" label="بازخوانی" />
            <ToolButton name="print" label="چاپ" />
            <ToolButton name="paste" label="چسباندن" />
            <ToolButton name="formAdd" label="افزودن فرم" />
            <ToolButton name="formFind" label="جستجو" />
            <ToolButton name="export" label="ارسال" />
            <ToolButton name="enter" label="ورود" />
            <ToolButton name="copy" label="کپی" />
            <ToolButton name="import" label="دریافت" />
            <ToolButton name="gear" label="تنظیمات" />
          </div>
          <span dir="rtl" className="mt-1 mr-2.5">بدون تغیر</span>
        </div>

        <div role="tablist" className="flex h-[18px] items-end bg-[#bccbe4] pl-1">
          {['مشخصات عوامل حقوق', 'مشخصات حکم'].map((t, i) => (
            <button
              key={t}
              role="tab"
              dir="rtl"
              aria-selected={tab === i}
              onClick={() => setTab(i)}
              className={clsx('h-4 px-1.5 whitespace-nowrap', tab === i && 'bg-[#f4f9fe]')}
            >
              {t}
            </button>
          ))}
        </div>

        <div className="flex flex-1 items-start justify-end border border-[#98a9c4] bg-white pt-px pr-px">
          <FactorsGrid />
        </div>

        <div className="flex h-[26px] items-center border-b border-[#75859f] bg-gradient-to-b from-[#ccd9ec] to-[#b3c3dd]">
          <ToolButton name="first" label="اولین" />
          <ToolButton name="up" label="قبلی" />
          <span className="w-7 text-center font-['Liberation_Mono',monospace] text-[12px]">1:8</span>
          <ToolButton name="down" label="بعدی" />
          <ToolButton name="last" label="آخرین" />
          <span className="mx-0.5 h-5 w-px bg-[#e9f0f9]" />
          <ToolButton name="green" label="نمای فرم" />
          <ToolButton name="columns" label="ستون ها" />
          <ToolButton name="gears" label="تنظیمات" />
          <ToolButton name="print" label="چاپ" />
          <span className="mx-0.5 h-5 w-px bg-[#e9f0f9]" />
          <ToolButton name="blocks" label="بلوک ها" />
        </div>

        {/* data entry */}
        <section className="mt-px bg-[#f8fbfe]">
          <div className="flex h-[21px] items-center justify-end gap-1 bg-[#9ab3d3] pr-0.5 text-[#eaf1f9]">
            <h2 dir="rtl">ورود اطلاعات</h2>
            <SmallIcon name="edit" />
            <SmallIcon name="pin" />
          </div>
          <div className="flex flex-col gap-0.5 py-[3px]">
            <div className="flex items-center justify-end gap-1">
              <input
                id="code"
                dir="rtl"
                autoFocus
                onFocus={(e) => e.target.select()}
                className="h-[19px] w-[63px] border border-[#2c4a7c] bg-white px-0.5 outline-none selection:bg-[#2f6fb5] selection:text-white"
                defaultValue="1"
              />
              <div className="w-[68px]">
                <label htmlFor="code" dir="rtl" className="whitespace-nowrap">کد خصیصه</label>
              </div>
            </div>
            <div className="flex items-center justify-end gap-1">
              <input
                id="title"
                dir="rtl"
                value={title}
                onChange={(e) => setTitle(e.target.value)}
                className="h-[19px] w-[214px] border border-[#5c3f5c] bg-[#ffc0cb] px-0.5"
              />
              <div className="w-[68px]">
                <label htmlFor="title" dir="rtl" className="whitespace-nowrap">شرح خصیصه</label>
              </div>
            </div>
          </div>
        </section>

        <h2 dir="rtl" className="flex h-5 items-center justify-center bg-[#2c4a8e] text-[#e6edf8]">فرمول ها</h2>
        <div className="flex border-b border-[#a9b8cf]">
          <FormulaForm />
          <div className="flex flex-[587] items-start justify-end bg-white pt-px pr-0.5">
            <table dir="rtl" className="table-fixed border-separate border-spacing-0">
              <GridHead
                columns={[
                  { title: 'تاریخ موثر', width: 'w-[61px]' },
                  { title: 'شرح فرمول', width: 'w-[133px]' },
                  { title: '...IsAutoPrem', width: 'w-[72px]', ltr: true },
                  { title: 'شرح روش محاسباتی', width: 'w-[106px]' },
                ]}
              />
            </table>
          </div>
        </div>
      </main>
      <footer className="h-2 bg-[#e3edf8]" />
    </div>
  )
}
